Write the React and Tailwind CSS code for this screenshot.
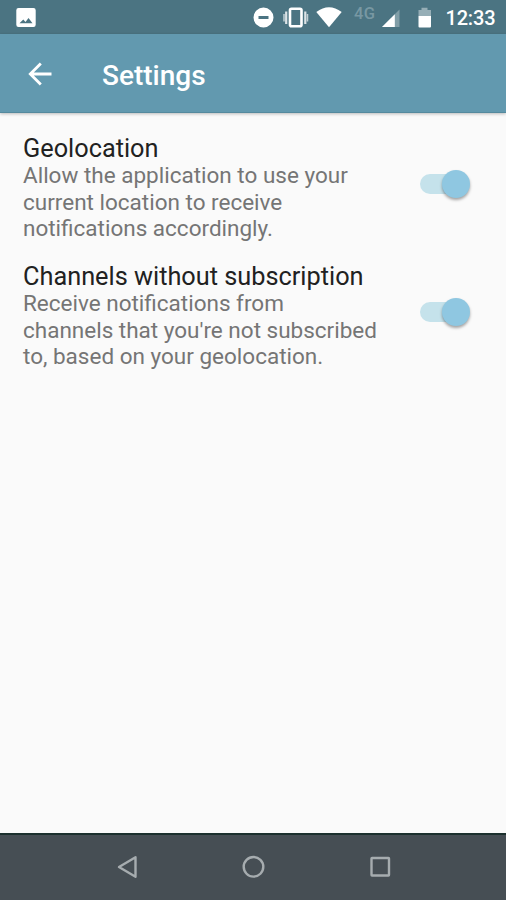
const settings = [
  {
    title: "Geolocation",
    lines: ["Allow the application to use your", "current location to receive", "notifications accordingly."],
  },
  {
    title: "Channels without subscription",
    lines: ["Receive notifications from", "channels that you're not subscribed", "to, based on your geolocation."],
  },
];

function StatusBar() {
  return (
    <div className="h-[34px] shrink-0 bg-[#4b7482] text-white">
      <svg className="block" width="506" height="34" viewBox="0 0 506 34" fill="white">
        <path
          fillRule="evenodd"
          d="M18.500 8h15a2.200 2.200 0 0 1 2.200 2.200v14.600a2.200 2.200 0 0 1-2.200 2.200h-15a2.200 2.200 0 0 1-2.200-2.200V10.200A2.200 2.200 0 0 1 18.500 8zM19.500 23.300h13l-4-5.300-3 4-2.200-2.400z"
        />
        <path fillRule="evenodd" d="M263.500 7.500a10 10 0 1 0 0 20a10 10 0 1 0 0-20zM258.500 16v3h10v-3z" />
        <rect x="290" y="8.700" width="11.500" height="17.600" rx="1.500" fill="none" stroke="white" strokeWidth="2.600" />
        <path d="M286.200 11.500v12.500M305.300 11.500v12.500" stroke="white" strokeWidth="2.200" opacity=".8" />
        <path d="M284 14v7.500M307.500 14v7.500" stroke="white" strokeWidth="1.500" opacity=".65" />
        <path d="M316.300 12Q329 2.500 341.700 12L329 27.300z" />
        <text x="354" y="19" fontFamily="Roboto" fontSize="16.500" fontWeight="500" fill="#7898a3" textLength="21">4G</text>
        <path d="M399.500 9.500V27H382z" opacity=".3" />
        <path d="M394.800 14.200V27H382z" />
        <path d="M418.500 10h3V7.700h6V10h3.500v6h-12.500z" opacity=".42" />
        <path d="M418.500 16H431v10.500a1 1 0 0 1-1 1h-10.500a1 1 0 0 1-1-1z" />
        <text x="445.500" y="25" fontFamily="Roboto" fontSize="20" fontWeight="500" textLength="50">12:33</text>
      </svg>
    </div>
  );
}

function Switch() {
  return (
    <div className="flex h-7 w-[50px] shrink-0 items-center rounded-full" role="switch" aria-checked="true">
      <div className="h-5 w-[42px] rounded-full bg-[#c5e2eb]" />
      <div className="-ml-5 size-7 shrink-0 rounded-full bg-[#8fc7e1] shadow-[0_2px_3px_rgba(0,0,0,0.35)]" />
    </div>
  );
}

export default function App() {
  return (
    <div className="flex h-[900px] w-[506px] flex-col overflow-hidden bg-[#fafafa] font-['Roboto',sans-serif]">
      <StatusBar />
      <header className="z-10 flex h-[79px] shrink-0 items-center border-b border-[#558a9e] bg-[#6299af] pl-7 text-white shadow-[0_1px_3px_rgba(0,0,0,0.25)]">
        <svg className="mt-px" width="24" height="24" viewBox="0 0 24 24" fill="none" stroke="white" strokeWidth="2.800">
          <path d="M23.500 12H2.500M12.800 1.500L2.300 12L12.800 22.500" />
        </svg>
        <h1 className="ml-[50px] pt-1.5 text-[28px] leading-8 font-medium">Settings</h1>
      </header>
      <main className="flex flex-1 flex-col pt-5">
        {settings.map((item) => (
          <section key={item.title} className="flex h-32 items-start justify-between pr-9 pl-[23px]">
            <div className="whitespace-nowrap">
              <h2 className="h-[29px] text-[25.300px] leading-8 text-[#212121]">{item.title}</h2>
              <p className="text-[22.500px] leading-[26.700px] text-[#757575]">
                {item.lines.map((line) => (
                  <span key={line} className="block">{line}</span>
                ))}
              </p>
            </div>
            <div className="mt-[37px]">
              <Switch />
            </div>
          </section>
        ))}
      </main>
      <nav className="h-[67px] shrink-0 border-t-2 border-[#1c302e] bg-[#464e54]">
        <svg className="block" width="506" height="65" viewBox="0 835 506 65" fill="none" stroke="#a6acaf" strokeWidth="2.400" strokeLinejoin="round">
          <path d="M119 867L135.500 857.200V876.800z" />
          <circle cx="253.500" cy="866.800" r="9.800" />
          <rect x="371.500" y="858" width="17.500" height="17.500" rx=".5" />
        </svg>
      </nav>
    </div>
  );
}
